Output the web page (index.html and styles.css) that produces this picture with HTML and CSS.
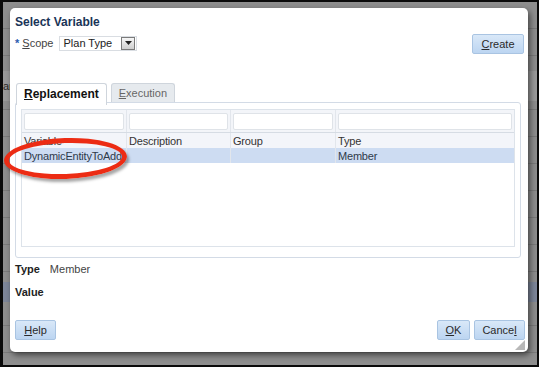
FILE: index.html
```html
<!DOCTYPE html>
<html lang="en">
<head>
    <meta charset="UTF-8">
    <title>Select Variable</title>
    <link rel="stylesheet" href="styles.css">
</head>
<body>
  <div class="screen">
    <div class="backdrop">
      <span class="behind-text">ar</span>
    </div>

    <!-- dialog window -->
    <div class="dialog">
      <div class="dlg-title">Select Variable</div>

      <div class="scope-row">
        <span class="req">*</span>
        <span class="lbl"><u>S</u>cope</span>
        <div class="select">
          <span class="select-text">Plan Type</span>
          <span class="select-btn"><svg width="7" height="4" viewBox="0 0 7 4"><path d="M0 0h7L3.5 4z" fill="#222"/></svg></span>
        </div>
        <span class="spacer"></span>
        <button class="btn create"><u>C</u>reate</button>
      </div>

      <div class="tabs">
        <div class="tab active"><u>R</u>eplacement</div>
        <div class="tab"><u>E</u>xecution</div>
      </div>

      <div class="panel">
        <div class="grid">
          <div class="row filters">
            <div class="cell c1"><span class="filter"></span></div>
            <div class="cell c2"><span class="filter"></span></div>
            <div class="cell c3"><span class="filter"></span></div>
            <div class="cell c4"><span class="filter"></span></div>
          </div>
          <div class="row head">
            <div class="cell c1">Variable</div>
            <div class="cell c2">Description</div>
            <div class="cell c3">Group</div>
            <div class="cell c4">Type</div>
          </div>
          <div class="row sel">
            <div class="cell c1">DynamicEntityToAdd</div>
            <div class="cell c2"></div>
            <div class="cell c3"></div>
            <div class="cell c4">Member</div>
          </div>
        </div>
      </div>

      <div class="info-row first"><b>Type</b><span>Member</span></div>
      <div class="info-row"><b>Value</b></div>

      <div class="foot">
        <button class="btn help"><u>H</u>elp</button>
        <span class="spacer"></span>
        <button class="btn ok"><u>O</u>K</button>
        <button class="btn cancel">Cance<u>l</u></button>
      </div>
      <div class="grip"></div>

      <!-- red callout ring -->
      <div class="ring"></div>
    </div>
  </div>
</body>
</html>
```

FILE: styles.css
```css
body{
  margin: 0;
  background: #000;
}

.screen{
  position: relative;
  width: 539px;
  height: 367px;
  box-sizing: border-box;
  border: 2px solid #0a0a0a;
  border-left-width: 3px;
  background: #8e8e8e;
  overflow: hidden;
  font-family: "Liberation Sans", Arial, sans-serif;
}

/* the page that sits behind the dialog */
.backdrop{
  position: absolute;
  inset: 0;
  background:
    linear-gradient(#9a9a9a, #9a9a9a) 0 69px / 100% 30px no-repeat,
    linear-gradient(#7d8699, #7d8699) 0 280px / 100% 20px no-repeat,
    repeating-linear-gradient(#8e8e8e 0 26px, #7b7b7b 26px 27px);
  background-color: #8e8e8e;
}
.behind-text{
  position: absolute;
  left: 0;
  top: 78px;
  font-size: 11px;
  color: #2b2b2b;
}

.dialog{
  position: absolute;
  left: 7px;
  top: 6px;
  width: 518px;
  height: 344px;
  box-sizing: border-box;
  background: #fff;
  border-radius: 5px;
  box-shadow: 2px 3px 6px rgba(0,0,0,.55);
  padding: 7px 5px 0 5px;
  display: flex;
  flex-direction: column;
  font-size: 11px;
  color: #333;
}
.dialog > *{ flex-shrink: 0; }

.dlg-title{
  font-weight: bold;
  font-size: 12px;
  color: #1a3457;
  height: 15px;
}

.scope-row{
  display: flex;
  align-items: center;
  height: 24px;
  margin-top: 1px;
}
.req{
  color: #2a5cb0;
  font-weight: bold;
  margin-right: 3px;
}
.lbl{
  color: #444;
  margin-right: 6px;
}
.select{
  display: flex;
  align-items: center;
  width: 78px;
  height: 15px;
  box-sizing: border-box;
  border: 1px solid #d9dde2;
}
.select-text{
  flex: 1;
  padding-left: 3px;
  color: #222;
}
.select-btn{
  width: 14px;
  height: 13px;
  display: flex;
  align-items: center;
  justify-content: center;
  background: linear-gradient(#f6f6f6, #cfcfcf);
  border: 1px solid #7b7b7b;
  box-sizing: border-box;
  margin-right: 1px;
}
.spacer{ flex: 1; }

.btn{
  font-family: "Liberation Sans", Arial, sans-serif;
  font-size: 11px;
  color: #2a2a2a;
  height: 20px;
  padding: 0 6px;
  border: 1px solid #a9c4e2;
  border-radius: 2px;
  background: linear-gradient(#d9e8f8, #bcd5f1);
}
.create{ width: 52px; margin-right: -1px; margin-top: 2px; }

.tabs{
  display: flex;
  margin-top: 28px;
  height: 20px;
  gap: 4px;
  padding-left: 1px;
  margin-bottom: -1px;
}
.tab{
  padding: 3px 7px 0;
  border: 1px solid #cfd5dc;
  border-bottom: none;
  border-radius: 3px 3px 0 0;
  background: #e6eaee;
  color: #666;
}
.tab.active{
  background: #fff;
  color: #111;
  font-weight: bold;
  font-size: 12px;
  padding-top: 3px;
  position: relative;
  z-index: 1;
  height: 18px;
}

.panel{
  height: 156px;
  box-sizing: border-box;
  border: 1px solid #d3dbe6;
  border-radius: 3px;
  padding: 6px 5px 10px;
  margin-right: 2px;
}
.grid{
  height: 100%;
  box-sizing: border-box;
  border: 1px solid #dde3ea;
  letter-spacing: -0.2px;
}
.row{
  display: flex;
}
.cell{
  box-sizing: border-box;
  border-right: 1px solid #e2e6ec;
  padding-left: 2px;
  display: flex;
  align-items: center;
}
.c1{ width: 105px; }
.c2{ width: 104px; }
.c3{ width: 105px; }
.c4{ flex: 1; border-right: none; }
.filters{
  height: 22px;
  background: #f3f5f9;
  border-bottom: 1px solid #d6dce4;
}
.filter{
  display: block;
  width: calc(100% - 2px);
  height: 17px;
  box-sizing: border-box;
  background: #fff;
  border: 1px solid #dfe3e8;
  border-radius: 2px;
}
.head{
  height: 15px;
  background: #f3f5fa;
  color: #333;
}
.sel{
  height: 15px;
  background: #cddcf2;
  color: #2f3a4a;
}

.info-row{
  display: flex;
  gap: 10px;
  height: 23px;
  align-items: center;
  color: #444;
}
.info-row b{
  color: #222;
  font-size: 11px;
}
.info-row.first{ margin-top: -1px; }

.foot{
  display: flex;
  gap: 4px;
  margin-top: 17px;
  margin-right: -2px;
}
.help{ width: 41px; }
.ok{ width: 33px; }
.cancel{ width: 51px; }

.grip{
  position: absolute;
  right: 3px;
  bottom: 2px;
  width: 10px;
  height: 10px;
  background-image: radial-gradient(#b8b8b8 0.8px, transparent 1px);
  background-size: 2px 2px;
  clip-path: polygon(100% 0, 100% 100%, 0 100%);
}

.ring{
  position: absolute;
  left: -6px;
  top: 130px;
  width: 113px;
  height: 31px;
  border: 5px solid #ec2c14;
  border-radius: 50%;
  transform: rotate(-2deg);
  box-shadow: 2px 3px 3px rgba(0,0,0,.35);
}
```
